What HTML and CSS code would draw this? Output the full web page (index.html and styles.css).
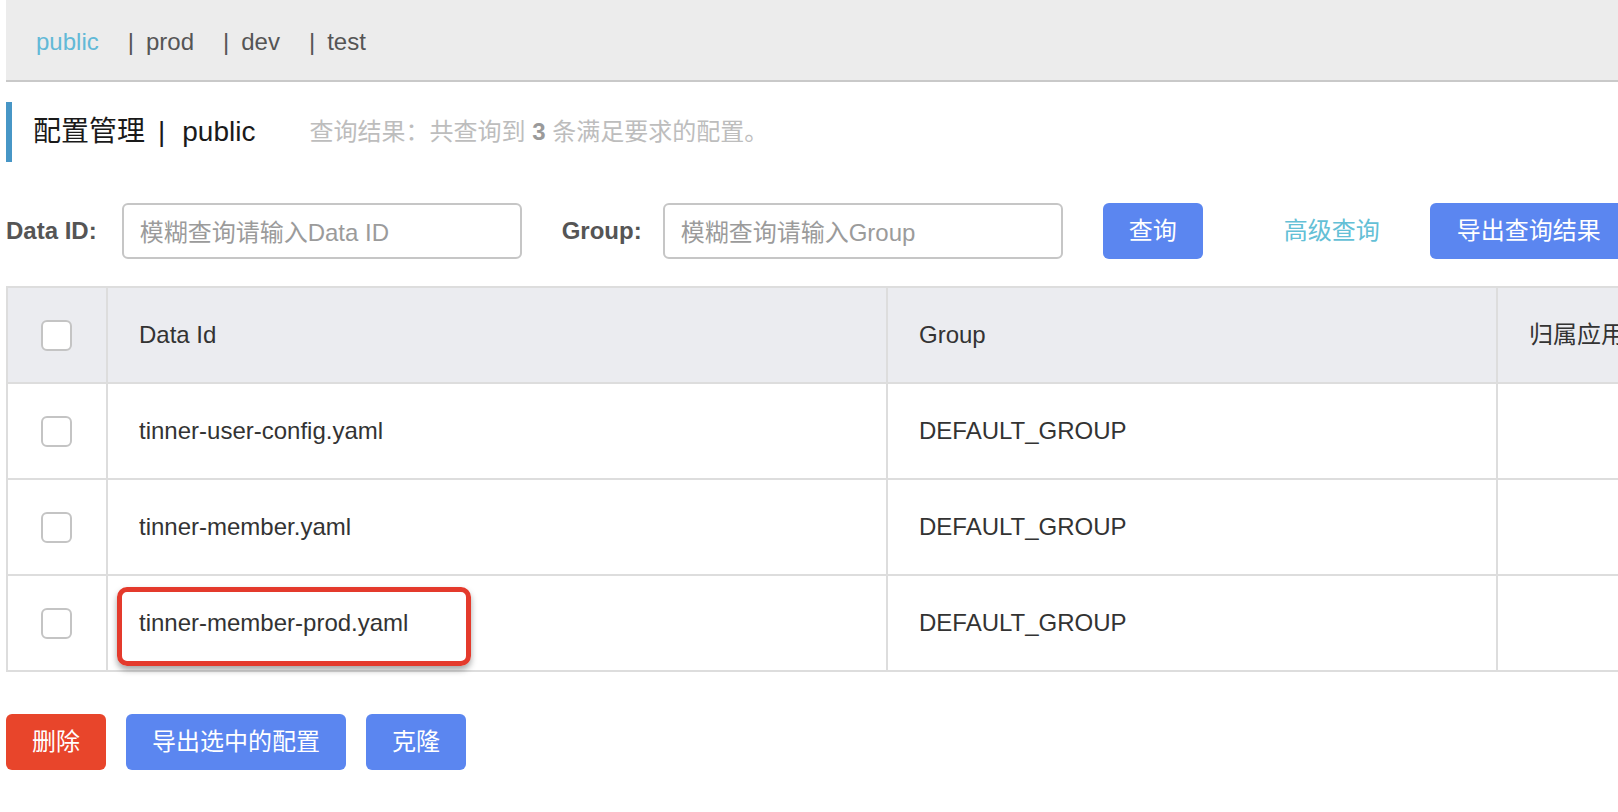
FILE: index.html
```html
<!DOCTYPE html>
<html lang="zh-CN">
<head>
<meta charset="utf-8">
<title>配置管理</title>
<link rel="stylesheet" href="styles.css">
</head>
<body>
<div class="page">
  <div class="topbar">
    <span class="tab active">public</span>
    <span class="tab"><span class="sep">|</span>prod</span>
    <span class="tab"><span class="sep">|</span>dev</span>
    <span class="tab"><span class="sep">|</span>test</span>
  </div>

  <div class="title-row">
    <span class="title">配置管理</span>
    <span class="title-sep">|</span>
    <span class="title">public</span>
    <span class="summary">查询结果：共查询到 <b>3</b> 条满足要求的配置。</span>
  </div>

  <div class="search-row">
    <label class="field-label label-id">Data ID:</label>
    <input class="field-input" type="text" placeholder="模糊查询请输入Data ID">
    <label class="field-label label-group">Group:</label>
    <input class="field-input" type="text" placeholder="模糊查询请输入Group">
    <button class="btn btn-primary btn-query">查询</button>
    <button class="btn btn-link">高级查询</button>
    <button class="btn btn-primary btn-export">导出查询结果</button>
  </div>

  <div class="table-wrap">
    <table class="grid">
      <colgroup>
        <col class="c-check">
        <col class="c-id">
        <col class="c-group">
        <col class="c-app">
        <col class="c-more">
      </colgroup>
      <thead>
        <tr>
          <th class="cell-check"><span class="checkbox"></span></th>
          <th>Data Id</th>
          <th>Group</th>
          <th>归属应用</th>
          <th></th>
        </tr>
      </thead>
      <tbody>
        <tr>
          <td class="cell-check"><span class="checkbox"></span></td>
          <td>tinner-user-config.yaml</td>
          <td>DEFAULT_GROUP</td>
          <td></td>
          <td></td>
        </tr>
        <tr>
          <td class="cell-check"><span class="checkbox"></span></td>
          <td>tinner-member.yaml</td>
          <td>DEFAULT_GROUP</td>
          <td></td>
          <td></td>
        </tr>
        <tr>
          <td class="cell-check"><span class="checkbox"></span></td>
          <td>tinner-member-prod.yaml</td>
          <td>DEFAULT_GROUP</td>
          <td></td>
          <td></td>
        </tr>
      </tbody>
    </table>
    <div class="highlight"></div>
  </div>

  <div class="actions">
    <button class="btn btn-danger btn-delete">删除</button>
    <button class="btn btn-primary btn-export-sel">导出选中的配置</button>
    <button class="btn btn-primary btn-clone">克隆</button>
  </div>
</div>
</body>
</html>
```

FILE: styles.css
```css
html, body {
  margin: 0;
  padding: 0;
  background: #ffffff;
  overflow: hidden;
}

body {
  font-family: "Liberation Sans", "Noto Sans CJK SC", sans-serif;
  color: #333333;
}

.page {
  padding-left: 6px;
  width: 2000px;
}

/* top namespace bar */
.topbar {
  box-sizing: border-box;
  height: 82px;
  background: #ececec;
  border-bottom: 2px solid #c9c9c9;
  display: flex;
  align-items: center;
  padding: 4px 0 0 30px;
  font-size: 24px;
  line-height: 24px;
  color: #555555;
}

.tab {
  margin-left: 29px;
  white-space: nowrap;
}

.tab:first-child {
  margin-left: 0;
}

.tab.active {
  color: #62b9d7;
}

.sep {
  margin-right: 12px;
}

/* title */
.title-row {
  margin-top: 20px;
  height: 60px;
  border-left: 6px solid #4796c6;
  padding-left: 21px;
  display: flex;
  align-items: center;
  white-space: nowrap;
}

.title {
  font-size: 28px;
  line-height: 32px;
  color: #1a1a1a;
}

.title-sep {
  font-size: 28px;
  line-height: 32px;
  color: #1a1a1a;
  margin: 0 17px 0 13px;
}

.summary {
  margin-left: 54px;
  font-size: 24px;
  line-height: 28px;
  color: #bdbdbd;
}

.summary b {
  color: #9a9a9a;
}

/* search row */
.search-row {
  margin-top: 41px;
  height: 56px;
  display: flex;
  align-items: center;
  white-space: nowrap;
}

.field-label {
  font-size: 24px;
  font-weight: bold;
  color: #555555;
}

.label-id {
  margin-right: 25px;
}

.label-group {
  margin-left: 40px;
  margin-right: 21px;
}

.field-input {
  box-sizing: border-box;
  width: 400px;
  height: 56px;
  border: 2px solid #c6c6c6;
  border-radius: 6px;
  padding: 4px 16px 0;
  font-family: "Liberation Sans", "Noto Sans CJK SC", sans-serif;
  font-size: 24px;
  color: #333333;
  background: #ffffff;
  outline: none;
}

.field-input::placeholder {
  color: #9b9b9b;
}

.btn {
  box-sizing: border-box;
  height: 56px;
  border: none;
  border-radius: 6px;
  padding: 0 26px;
  font-family: "Liberation Sans", "Noto Sans CJK SC", sans-serif;
  font-size: 24px;
  line-height: 24px;
  color: #ffffff;
  flex: none;
}

.btn-primary {
  background: #5b86f0;
}

.btn-danger {
  background: #e8452b;
}

.btn-link {
  background: transparent;
  color: #63c0d6;
  padding: 0;
}

.btn-query {
  margin-left: 40px;
  width: 100px;
  padding: 0;
}

.search-row .btn-link {
  margin-left: 81px;
}

.btn-export {
  margin-left: 50px;
  width: 198px;
  padding: 0;
}

/* table */
.table-wrap {
  position: relative;
  margin-top: 27px;
}

.grid {
  table-layout: fixed;
  border-collapse: separate;
  border-spacing: 0;
  width: 1990px;
  border-top: 2px solid #dddddd;
  border-left: 2px solid #dddddd;
  font-size: 24px;
  color: #333333;
}

.c-check { width: 100px; }
.c-id { width: 780px; }
.c-group { width: 610px; }
.c-app { width: 300px; }
.c-more { width: 200px; }

.grid th,
.grid td {
  box-sizing: border-box;
  height: 96px;
  padding: 0 0 0 31px;
  border-right: 2px solid #dddddd;
  border-bottom: 2px solid #dddddd;
  text-align: left;
  font-weight: normal;
  white-space: nowrap;
  vertical-align: middle;
  line-height: 28px;
}

.grid thead th {
  background: #ebecf0;
}

.grid .cell-check {
  padding: 0 2px 0 0;
  text-align: center;
}

.checkbox {
  display: inline-block;
  box-sizing: border-box;
  width: 31px;
  height: 31px;
  border: 2px solid #c4c4c4;
  border-radius: 6px;
  background: #ffffff;
  vertical-align: middle;
}

/* annotation box over the third row */
.highlight {
  position: absolute;
  left: 111px;
  top: 301px;
  width: 354px;
  height: 79px;
  box-sizing: border-box;
  border: 5px solid #e43a2c;
  border-radius: 10px;
  box-shadow: 0 4px 6px rgba(0, 0, 0, 0.35);
}

/* bottom actions */
.actions {
  margin-top: 42px;
  display: flex;
  gap: 20px;
}

.btn-delete {
  width: 100px;
  padding: 0;
}

.btn-export-sel {
  width: 220px;
  padding: 0;
}

.btn-clone {
  width: 100px;
  padding: 0;
}
```
